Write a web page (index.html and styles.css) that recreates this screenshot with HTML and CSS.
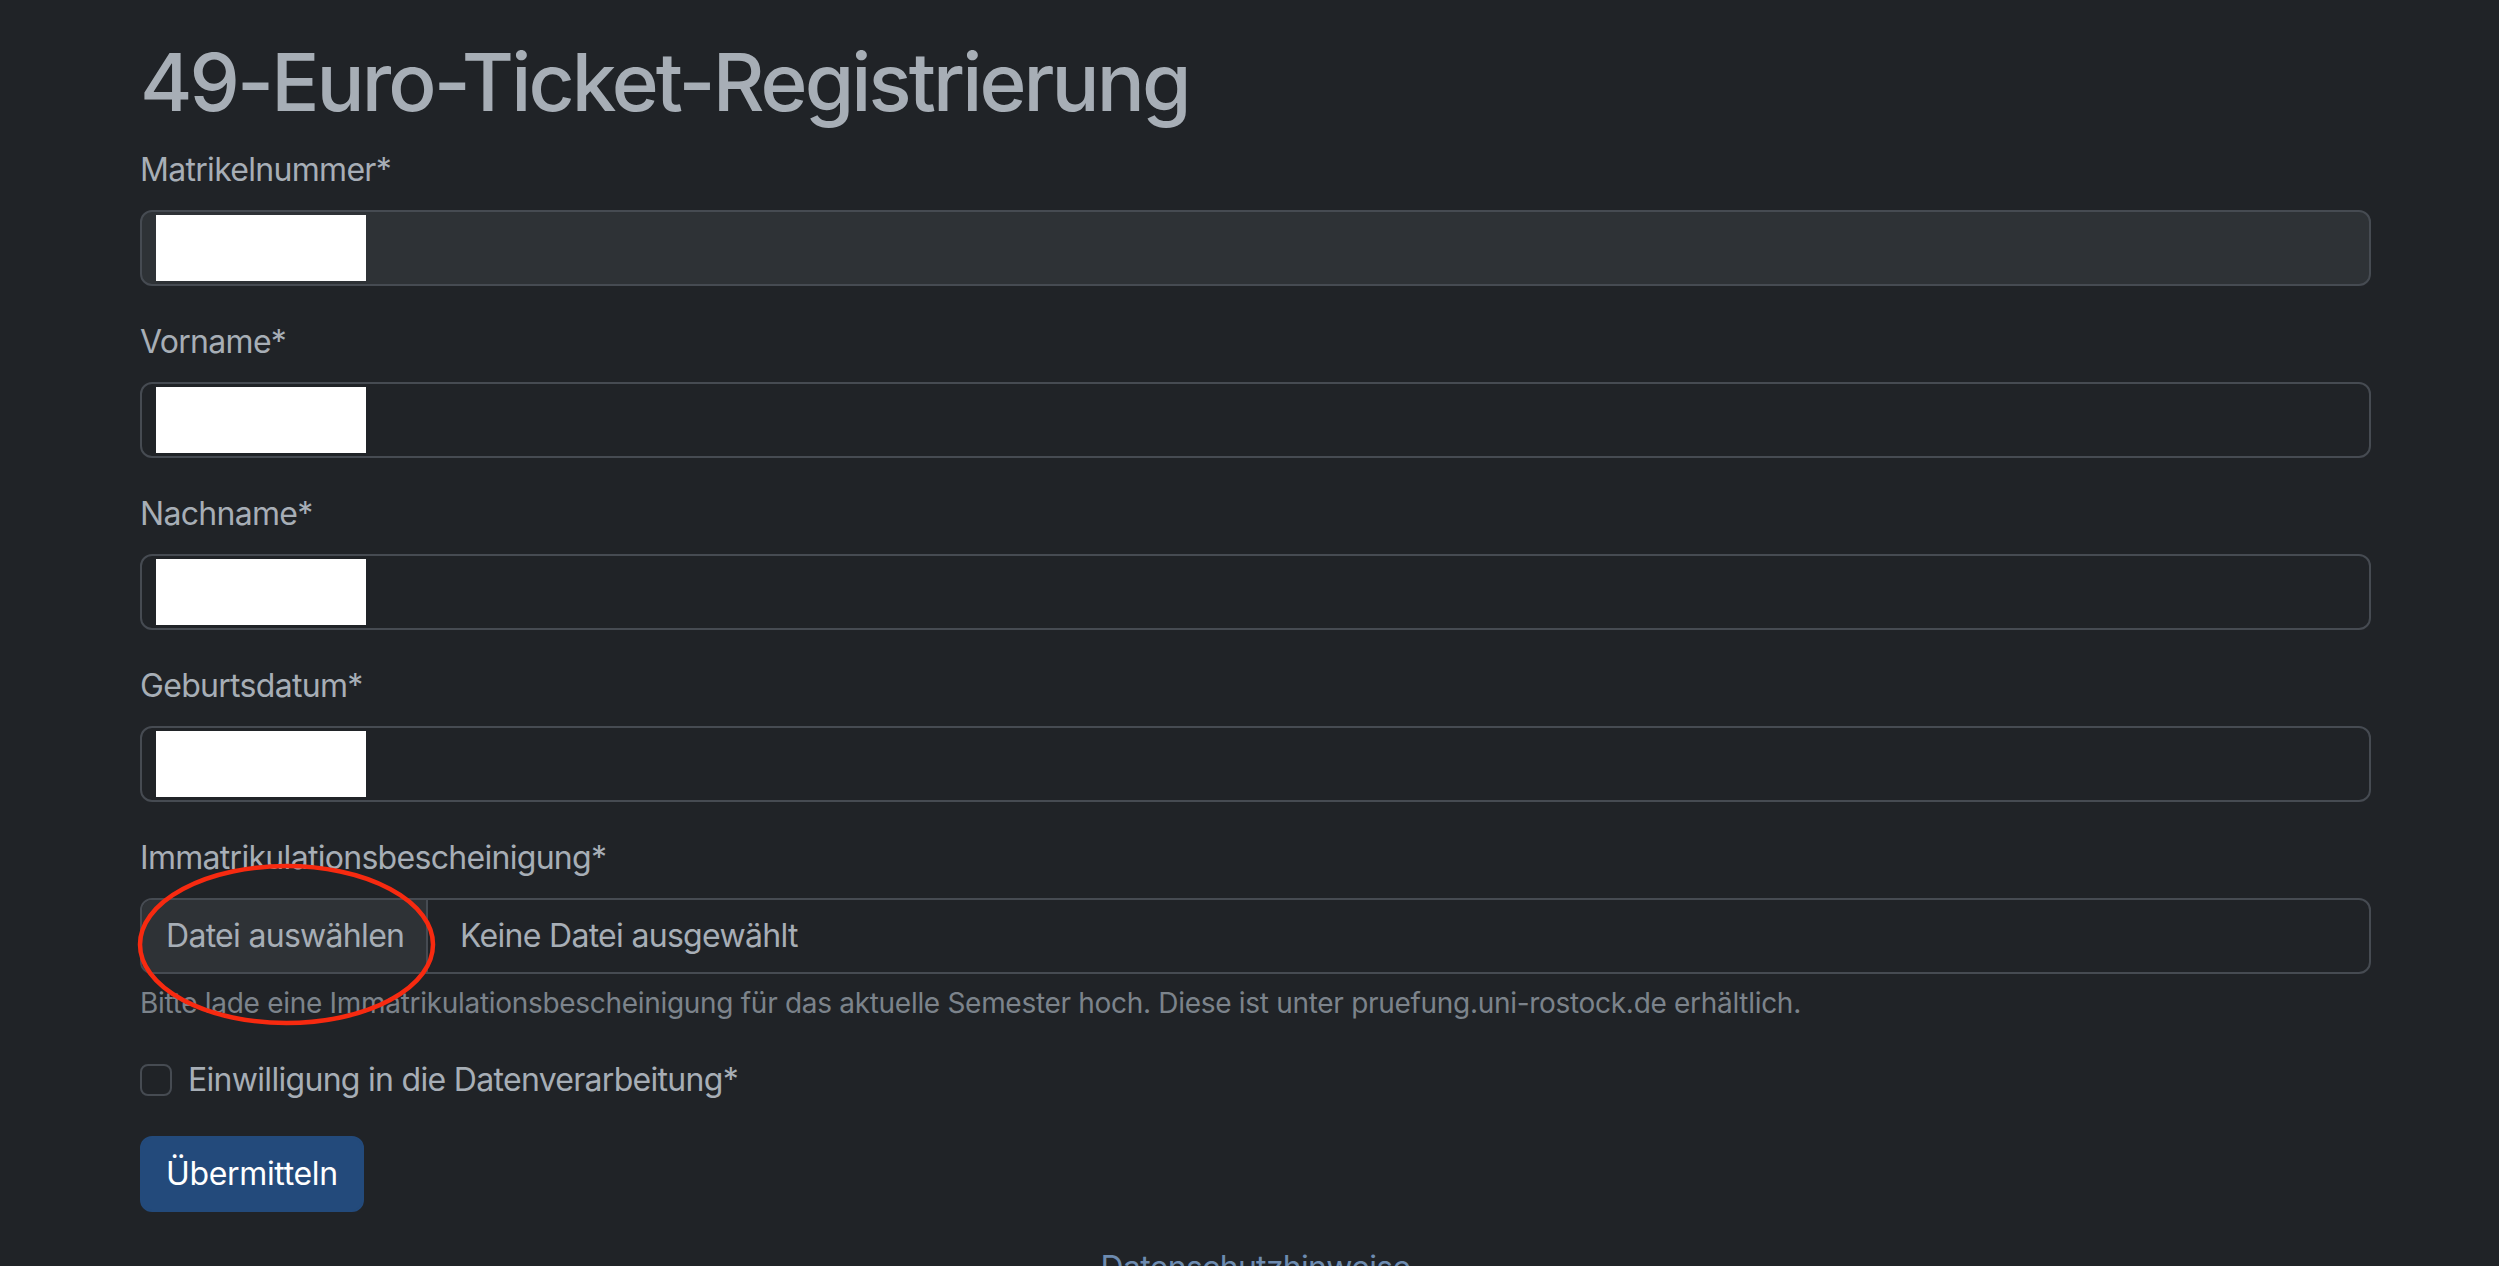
FILE: index.html
```html
<!DOCTYPE html>
<html lang="de">
<head>
<meta charset="utf-8">
<title>49-Euro-Ticket-Registrierung</title>
<link rel="stylesheet" href="styles.css">
</head>
<body>
<main class="container">
  <h1 class="title">49-Euro-Ticket-Registrierung</h1>
  <form class="form">
    <div class="group">
      <label class="label">Matrikelnummer*</label>
      <div class="input input-readonly"><span class="redact"></span></div>
    </div>
    <div class="group">
      <label class="label">Vorname*</label>
      <div class="input"><span class="redact"></span></div>
    </div>
    <div class="group">
      <label class="label">Nachname*</label>
      <div class="input"><span class="redact"></span></div>
    </div>
    <div class="group">
      <label class="label">Geburtsdatum*</label>
      <div class="input"><span class="redact"></span></div>
    </div>
    <div class="group">
      <label class="label">Immatrikulationsbescheinigung*</label>
      <div class="input file-input">
        <span class="file-btn">Datei auswählen</span>
        <span class="file-text">Keine Datei ausgewählt</span>
        <svg class="annot" width="301" height="165" viewBox="0 0 301 165" aria-hidden="true">
          <ellipse cx="150.5" cy="82.5" rx="146.5" ry="78.5" fill="none" stroke="#f72a10" stroke-width="4.5"/>
        </svg>
      </div>
      <div class="help">Bitte lade eine Immatrikulationsbescheinigung für das aktuelle Semester hoch. Diese ist unter pruefung.uni-rostock.de erhältlich.</div>
    </div>
    <div class="check">
      <span class="check-box"></span>
      <span class="check-label">Einwilligung in die Datenverarbeitung*</span>
    </div>
    <button type="button" class="btn">Übermitteln</button>
  </form>
  <footer class="footer"><a class="link" href="#">Datenschutzhinweise</a></footer>
</main>
</body>
</html>
```

FILE: styles.css
```css
* { box-sizing: border-box; }

html, body {
  margin: 0;
  padding: 0;
  background: #202327;
  height: 100%;
  overflow: hidden;
}

body {
  font-family: Inter, "Noto Sans", "Liberation Sans", sans-serif;
  color: #a7aeb6;
  font-size: 32px;
  line-height: 48px;
  letter-spacing: -0.7px;
}

.container {
  width: 2231px;
  margin-left: 140px;
  padding-top: 34px;
}

.title {
  margin: 0 0 16px 0;
  font-size: 80px;
  line-height: 96px;
  font-weight: 500;
  letter-spacing: -2.9px;
  color: #a7aeb6;
}

.form {
  display: flex;
  flex-direction: column;
  align-items: flex-start;
}

.group {
  width: 100%;
  margin-bottom: 32px;
}

.label {
  display: block;
  margin-bottom: 16px;
  font-size: 32px;
  line-height: 48px;
}

.input {
  position: relative;
  width: 100%;
  height: 76px;
  border: 2px solid #464b52;
  border-radius: 12px;
  background: #202327;
  display: flex;
  align-items: center;
}

.input-readonly {
  background: #2e3236;
}

.redact {
  position: absolute;
  left: 14px;
  top: 3px;
  width: 210px;
  height: 66px;
  background: #ffffff;
}

.file-btn {
  flex: none;
  width: 286px;
  height: 100%;
  padding-left: 24px;
  display: flex;
  align-items: center;
  background: #2e3236;
  border-right: 2px solid #464b52;
  border-radius: 10px 0 0 10px;
}

.file-text {
  margin-left: 32px;
}

.annot {
  position: absolute;
  left: -6px;
  top: -38px;
  overflow: visible;
  pointer-events: none;
}

.help {
  margin-top: 8px;
  font-size: 28px;
  line-height: 42px;
  color: #7c838b;
  letter-spacing: -0.3px;
}

.check {
  display: flex;
  align-items: center;
  height: 48px;
  margin-bottom: 32px;
}

.check-box {
  width: 32px;
  height: 32px;
  border: 2px solid #464b52;
  border-radius: 8px;
  background: #202327;
  margin-right: 16px;
}

.btn {
  font-family: inherit;
  font-size: 32px;
  line-height: 48px;
  padding: 12px 24px;
  height: 76px;
  border: 2px solid #234a7b;
  border-radius: 12px;
  background: #234a7b;
  color: #ffffff;
  letter-spacing: -0.35px;
}

.footer {
  margin-top: 32px;
  text-align: center;
  line-height: 48px;
}

.link {
  color: #6d8bb0;
  text-decoration: none;
}
```
